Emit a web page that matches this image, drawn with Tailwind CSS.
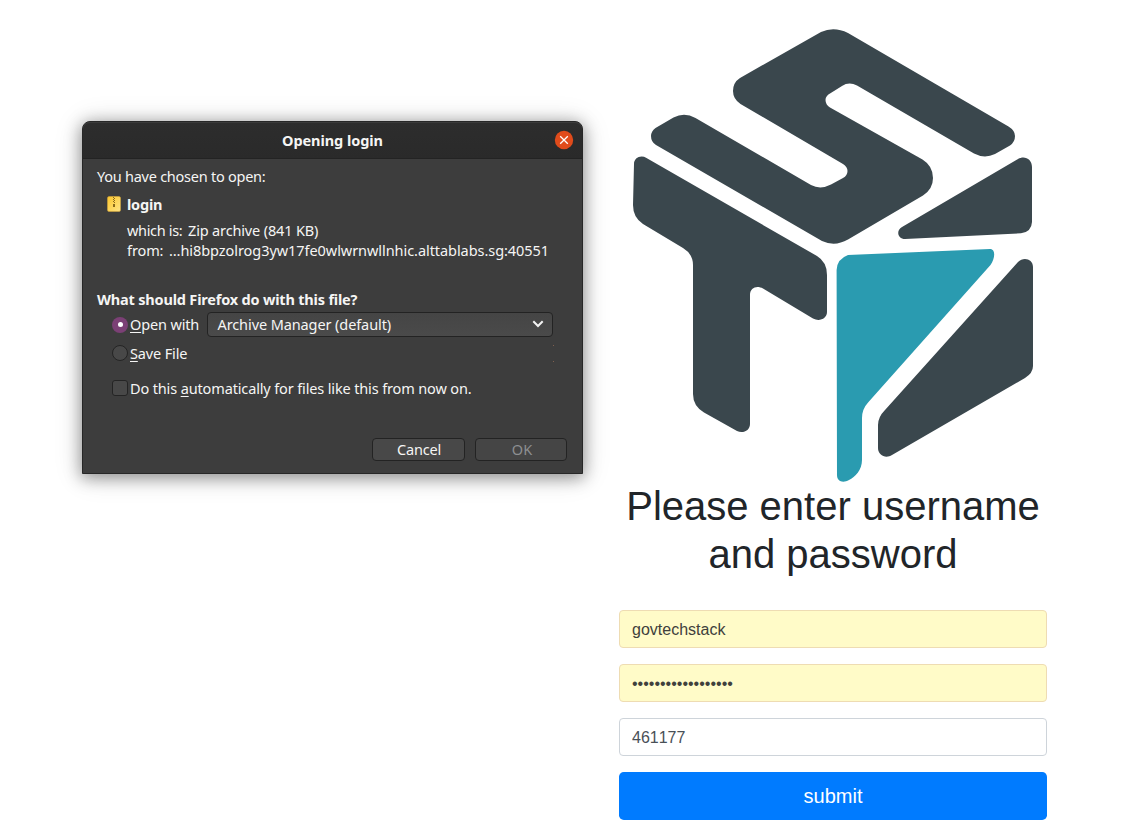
<!DOCTYPE html>
<html lang="en">
<head>
<meta charset="utf-8">
<title>Login</title>
<script src="https://cdn.jsdelivr.net/npm/@tailwindcss/browser@4"></script>
</head>
<body class="flex h-[836px] w-[1146px] items-start overflow-hidden bg-white">

<section class="mt-[121px] ml-[82px] h-[353px] w-[501px] shrink-0 rounded-t-lg border border-[#272727] bg-[#3d3d3d] font-['Noto_Sans',sans-serif] text-[14.5px] leading-5 whitespace-nowrap text-[#f5f5f4] shadow-[0_3px_16px_1px_rgba(0,0,0,0.38),0_2px_30px_rgba(0,0,0,0.14)]">
  <header class="flex h-[37px] items-center rounded-t-[7px] border-t border-b border-t-[#3b3b3b] border-b-[#232323] bg-linear-to-b from-[#2d2d2d] to-[#2a2a2a] pr-2 pb-px pl-[199px]">
    <h2 class="mr-auto font-bold tracking-[-0.06px]">Opening login</h2>
    <svg class="size-5" viewBox="0 0 20 20"><circle cx="10" cy="10" r="9.2" fill="#e04b1b"/><path d="M6.2 6.2l7.6 7.6M13.8 6.2l-7.6 7.6" stroke="#fff" stroke-width="1.3"/></svg>
  </header>

  <div class="px-[14px] pt-[7px]">
    <p class="tracking-[-0.25px]">You have chosen to open:</p>
    <div class="mt-2 ml-[10px] flex">
      <svg class="mt-[2px] h-4 w-[14px]" viewBox="0 0 14 16">
        <defs><linearGradient id="zip" x1="0" y1="0" x2="1" y2="1"><stop offset="0" stop-color="#fcc72e"/><stop offset="1" stop-color="#fee384"/></linearGradient></defs>
        <rect x=".5" y=".5" width="13" height="15" rx="1.5" fill="url(#zip)" stroke="#d9a93a" stroke-width=".5"/>
        <path d="M6 1h1v1H6zM7 2h1v1H7zM6 3h1v1H6zM7 4h1v1H7zM6 5h1v1H6zM7 6h1v1H7zM6 8h2v3H6z" fill="#8a6a1c"/>
      </svg>
      <strong class="ml-[6px] tracking-[-0.2px]">login</strong>
    </div>
    <div class="mt-[6px] ml-[30px]">
      <p class="flex"><span class="w-[61px] tracking-[-0.33px]">which is:</span><span class="tracking-[-0.15px]">Zip archive (841 KB)</span></p>
      <p class="flex"><span class="w-[42px] tracking-[-0.1px]">from:</span><span class="tracking-[-0.06px]">…hi8bpzolrog3yw17fe0wlwrnwllnhic.alttablabs.sg:40551</span></p>
    </div>

    <p class="mt-[29px] font-bold tracking-[-0.19px]">What should Firefox do with this file?</p>
    <label class="mt-[3px] ml-[15px] flex h-[25px] items-center tracking-[-0.15px]">
      <span class="grid size-4 place-items-center rounded-full bg-[#7b4075]"><span class="size-[5px] rounded-full bg-white"></span></span>
      <span class="ml-[2px] w-[77px] pb-[2px]"><span class="underline underline-offset-2">O</span>pen with</span>
      <span class="flex h-[25px] w-[346px] items-center rounded-[4px] border border-[#232323] bg-linear-to-b from-[#454545] to-[#4a4a4a] pr-2 pl-[9.5px] tracking-[-0.1px]">
        <span class="mr-auto pb-[2px]">Archive Manager (default)</span>
        <svg class="mb-px size-3" viewBox="0 0 12 12" fill="none" stroke="#f3f3f3" stroke-width="2"><path d="M1.3 3.300L6 8l4.700-4.700"/></svg>
      </span>
    </label>
    <label class="mt-2 mr-[14px] ml-[15px] flex h-[17px] items-center tracking-[-0.15px]">
      <span class="mb-px size-4 rounded-full border border-[#242424] bg-[#484848]"></span>
      <span class="ml-[2px] pb-[2px]"><span class="underline underline-offset-2">S</span>ave File</span>
      <span class="ml-auto flex h-[17px] w-px flex-col justify-between"><span class="h-px bg-[#80604f]"></span><span class="h-px bg-[#80604f]"></span></span>
    </label>
    <label class="mt-[18px] ml-[15px] flex h-4 items-center tracking-[-0.14px]">
      <span class="size-4 rounded-[3px] border border-[#242424] bg-[#484848]"></span>
      <span class="ml-[2px]">Do this <span class="underline underline-offset-2">a</span>utomatically for files like this from now on.</span>
    </label>
    <div class="mt-[42px] -mr-px flex justify-end gap-[10px] pr-[2px]">
      <span class="flex h-[23px] w-[93px] items-center justify-center rounded-[4px] border border-[#232323] bg-[#484848] pb-[2px] pl-px tracking-[-0.2px]">Cancel</span>
      <span class="flex h-[23px] w-[92px] items-center justify-center rounded-[4px] border border-[#232323] bg-[#454545] pb-[2px] pl-[2px] text-[#8d8f91]">OK</span>
    </div>
  </div>
</section>

<main class="ml-9 w-[428px] shrink-0 font-['Liberation_Sans',sans-serif] text-[#212529]">
  <svg class="block h-[482px] w-[428px]" viewBox="619 0 428 482" overflow="visible" fill="#3a474d">
    <path d="M740 78L821 32Q834 26 848 33L1008.500 126.500Q1015 130.500 1015 136Q1015 142 1010 145.500L995 154Q984.500 159 974 153.500L857 85.500Q849 81.500 842 86L830 93.500Q825.500 96 825.500 100Q825.500 104.500 830 107.500L922.500 159.500Q933 166 933 178Q933 189 923 195.500L848 239.500Q835 247 822 241L656 145Q651 142 651 136Q651 131.500 655.500 128L673.500 117.500Q684.500 112 695.500 118L811 185Q820.500 190 831 184.500L843 178Q847.500 175.500 847.500 171Q847.500 167 843 164L740.500 104Q733 99 733 91Q733 82.500 740 78Z"/>
    <path d="M634 164C634 158 640.500 154.500 646.500 158L817 256Q827 262 827 275V312C827 318.500 819.500 322 813 318.500L763 288.500C757 285 750 287.500 750 295V424C750 430.500 743 434 737 431L704 412.500Q693 406 693 394V265Q693 254 683 248L643 224Q633 217.500 633 205Z"/>
    <path d="M1018 159C1024.500 155 1032 159 1032 167V222Q1031.500 232 1021 233.300L905 239C898 239 895.500 231 902 227Z"/>
    <path d="M1018 262C1023.500 256.500 1033 259 1033 267V366Q1033 373 1025 378L892 455C886 459 878 455.500 878 448V425Q878 417 885 410Z"/>
    <path d="M848 255L990 249C996 249 995 259 990.500 265L868.500 402Q862 409 862 418V460C862 470 855 477 849 480C843 483.500 837 481.500 837 475L836.600 270Q837 259 848 255Z" fill="#2a9bb0"/>
  </svg>
  <h1 class="text-center text-[40px] leading-[48px]">Please enter username<br>and password</h1>
  <form class="mt-8 flex flex-col gap-4">
    <input type="text" value="govtechstack" class="h-[38px] rounded-[4px] border border-[#eedcb3] bg-[#fffbc8] px-3 pt-[2px] text-base text-[#40403c]">
    <input type="password" value="abcdefghijklmnopqr" class="h-[38px] rounded-[4px] border border-[#eedcb3] bg-[#fffbc8] px-3 pt-[2px] text-base text-[#40403c]">
    <input type="text" value="461177" class="h-[38px] rounded-[4px] border border-[#ced4da] bg-white px-3 pt-[2px] text-base text-[#495057] [font-kerning:none]">
    <button type="button" class="h-12 rounded-[4.8px] bg-[#007bff] text-xl text-white">submit</button>
  </form>
</main>
</body>
</html>
